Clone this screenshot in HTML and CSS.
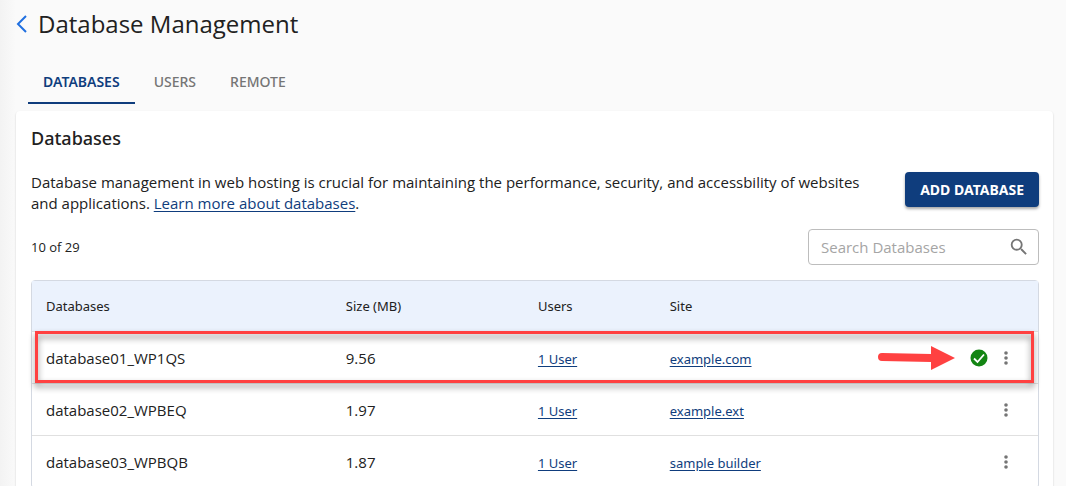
FILE: index.html
```html
<!DOCTYPE html>
<html lang="en">
  <head>
    <meta charset="UTF-8" />
    <meta name="viewport" content="width=device-width, initial-scale=1.0" />
    <title>Database Management</title>
    <link rel="stylesheet" href="styles.css">
  </head>
  <body>
    <header class="page-header">
      <a href="#" class="back" aria-label="Back">
        <svg width="12" height="18" viewBox="0 0 12 18"><path d="M10 1 2 9l8 8" fill="none" stroke="currentColor" stroke-width="2" /></svg>
      </a>
      <h1>Database Management</h1>
    </header>
    <nav class="tabs">
      <a href="#" class="tab active">DATABASES</a>
      <a href="#" class="tab">USERS</a>
      <a href="#" class="tab">REMOTE</a>
    </nav>
    <main class="card">
      <h2>Databases</h2>
      <div class="intro">
        <p>Database management in web hosting is crucial for maintaining the performance, security, and accessbility of websites and applications. <a href="#">Learn more about databases</a>.</p>
        <button type="button" class="add">ADD DATABASE</button>
      </div>
      <div class="toolbar">
        <span class="count">10 of 29</span>
        <div class="search">
          <input type="text" placeholder="Search Databases" aria-label="Search Databases" />
          <svg width="22" height="22" viewBox="0 0 24 24"><path fill="currentColor" d="M15.5 14h-.79l-.28-.27A6.47 6.47 0 0 0 16 9.5 6.5 6.5 0 1 0 9.5 16c1.61 0 3.09-.59 4.23-1.57l.27.28v.79l5 4.99L20.49 19l-4.99-5zm-6 0a4.5 4.5 0 1 1 0-9 4.5 4.5 0 0 1 0 9z" /></svg>
        </div>
      </div>
      <div class="table-wrap">
        <table>
          <thead>
            <tr>
              <th class="col-name">Databases</th>
              <th class="col-size">Size (MB)</th>
              <th class="col-users">Users</th>
              <th class="col-site">Site</th>
              <th aria-label="Actions"></th>
            </tr>
          </thead>
          <tbody>
            <tr class="marked">
              <td>database01_WP1QS</td>
              <td>9.56</td>
              <td><a href="#">1 User</a></td>
              <td><a href="#">example.com</a></td>
              <td>
                <div class="actions">
                  <svg class="arrow" width="78" height="26" viewBox="0 0 78 26"><path fill="#ff4141" d="M5 8 54 9V1l24 12-24 12v-8L5 16a4 4 0 0 1 0-8z" /></svg>
                  <svg class="check" width="18" height="18" viewBox="0 0 18 18"><circle cx="9" cy="9" r="8.5" fill="#138513" /><path d="m4 9.500 3.500 3.500L14 5.500" fill="none" stroke="#fff" stroke-width="1.800" /></svg>
                  <button type="button" class="more" aria-label="More actions">
                    <svg width="6" height="16" viewBox="0 0 6 16" fill="currentColor"><circle cx="3" cy="3" r="1.800" /><circle cx="3" cy="8" r="1.800" /><circle cx="3" cy="13" r="1.800" /></svg>
                  </button>
                </div>
                <div class="highlight"></div>
              </td>
            </tr>
            <tr>
              <td>database02_WPBEQ</td>
              <td>1.97</td>
              <td><a href="#">1 User</a></td>
              <td><a href="#">example.ext</a></td>
              <td>
                <div class="actions">
                  <button type="button" class="more" aria-label="More actions">
                    <svg width="6" height="16" viewBox="0 0 6 16" fill="currentColor"><circle cx="3" cy="3" r="1.800" /><circle cx="3" cy="8" r="1.800" /><circle cx="3" cy="13" r="1.800" /></svg>
                  </button>
                </div>
              </td>
            </tr>
            <tr>
              <td>database03_WPBQB</td>
              <td>1.87</td>
              <td><a href="#">1 User</a></td>
              <td><a href="#">sample builder</a></td>
              <td>
                <div class="actions">
                  <button type="button" class="more" aria-label="More actions">
                    <svg width="6" height="16" viewBox="0 0 6 16" fill="currentColor"><circle cx="3" cy="3" r="1.800" /><circle cx="3" cy="8" r="1.800" /><circle cx="3" cy="13" r="1.800" /></svg>
                  </button>
                </div>
              </td>
            </tr>
          </tbody>
        </table>
      </div>
    </main>
  </body>
</html>
```
FILE: styles.css
```css
* {
  box-sizing: border-box;
}
body {
  margin: 0;
  min-height: 100vh;
  padding: 0 13px 0 16px;
  overflow: hidden;
  font-family: "Open Sans", "Noto Sans", sans-serif;
  font-size: 15px;
  color: #212121;
  background: linear-gradient(to right, #f3f3f3, #fafafa 16px);
}
h1,
h2,
p {
  margin: 0;
}
a {
  color: #0f3d7d;
  text-underline-offset: 2px;
}
.page-header {
  display: flex;
  align-items: center;
  gap: 10px;
  height: 47px;
}
.back {
  display: flex;
  color: #1f6fe0;
}
h1 {
  font-size: 24px;
  font-weight: 400;
}
.tabs {
  display: flex;
  gap: 4px;
  padding: 14px 12px 7px;
}
.tab {
  height: 43px;
  padding: 0 15px;
  line-height: 42px;
  font-family: "Noto Sans", sans-serif;
  font-size: 14px;
  font-weight: 500;
  color: #757575;
  text-decoration: none;
}
.tab.active {
  color: #0f3d7d;
  font-weight: 600;
  border-bottom: 2px solid #0f3d7d;
}
.card {
  padding: 14px 14px 16px 15px;
  background: #fff;
  border-radius: 4px;
  box-shadow: 0 1px 2px rgba(0, 0, 0, 0.2);
}
h2 {
  font-family: "Noto Sans", sans-serif;
  font-size: 18px;
  line-height: 26px;
  font-weight: 500;
}
.intro {
  display: flex;
  justify-content: space-between;
  align-items: flex-start;
  gap: 36px;
  margin-top: 21px;
}
.intro p {
  line-height: 21px;
}
.add {
  flex: none;
  height: 35px;
  padding: 0 15px;
  font-family: "Noto Sans", sans-serif;
  font-size: 14px;
  font-weight: 700;
  color: #fff;
  background: #0f3d7d;
  border: none;
  border-radius: 4px;
  box-shadow: 0 2px 3px rgba(0, 0, 0, 0.35);
  cursor: pointer;
}
.toolbar {
  display: flex;
  justify-content: space-between;
  align-items: center;
  margin: 15px 0;
}
.count {
  font-size: 13px;
}
.search {
  display: flex;
  align-items: center;
  width: 231px;
  height: 36px;
  padding: 0 8px 0 12px;
  color: #757575;
  border: 1px solid #bdbdbd;
  border-radius: 4px;
}
.search input {
  flex: 1;
  min-width: 0;
  padding: 0;
  font: inherit;
  border: none;
  outline: none;
}
.search input::placeholder {
  color: #a5a5a5;
}
.table-wrap {
  border: 1px solid #d4d9e2;
  border-radius: 4px;
}
table {
  width: 100%;
  table-layout: fixed;
  border-collapse: separate;
  border-spacing: 0;
}
th,
td {
  height: 52px;
  padding: 0 14px;
  text-align: left;
  border-bottom: 1px solid #e0e0e0;
}
th {
  height: 51px;
  font-family: "Noto Sans", sans-serif;
  font-size: 13px;
  font-weight: 400;
  background: #ebf2fd;
}
td a {
  font-family: "Noto Sans", sans-serif;
  font-size: 13px;
}
.col-name {
  width: 29.8%;
}
.col-size {
  width: 19.1%;
}
.col-users {
  width: 13.1%;
}
.col-site {
  width: 15%;
}
.actions {
  display: flex;
  justify-content: flex-end;
  align-items: center;
  gap: 15px;
}
.arrow {
  flex: none;
}
.more {
  display: flex;
  padding: 0 15px 0 0;
  color: #757575;
  background: none;
  border: none;
  cursor: pointer;
}
/* callout frame around the marked row */
.marked {
  position: relative;
}
.highlight {
  position: absolute;
  inset: -1px 4px 1px 3px;
  border: 3px solid #ff4141;
  filter: drop-shadow(0 4px 3px rgba(0, 0, 0, 0.45));
  pointer-events: none;
}
```
